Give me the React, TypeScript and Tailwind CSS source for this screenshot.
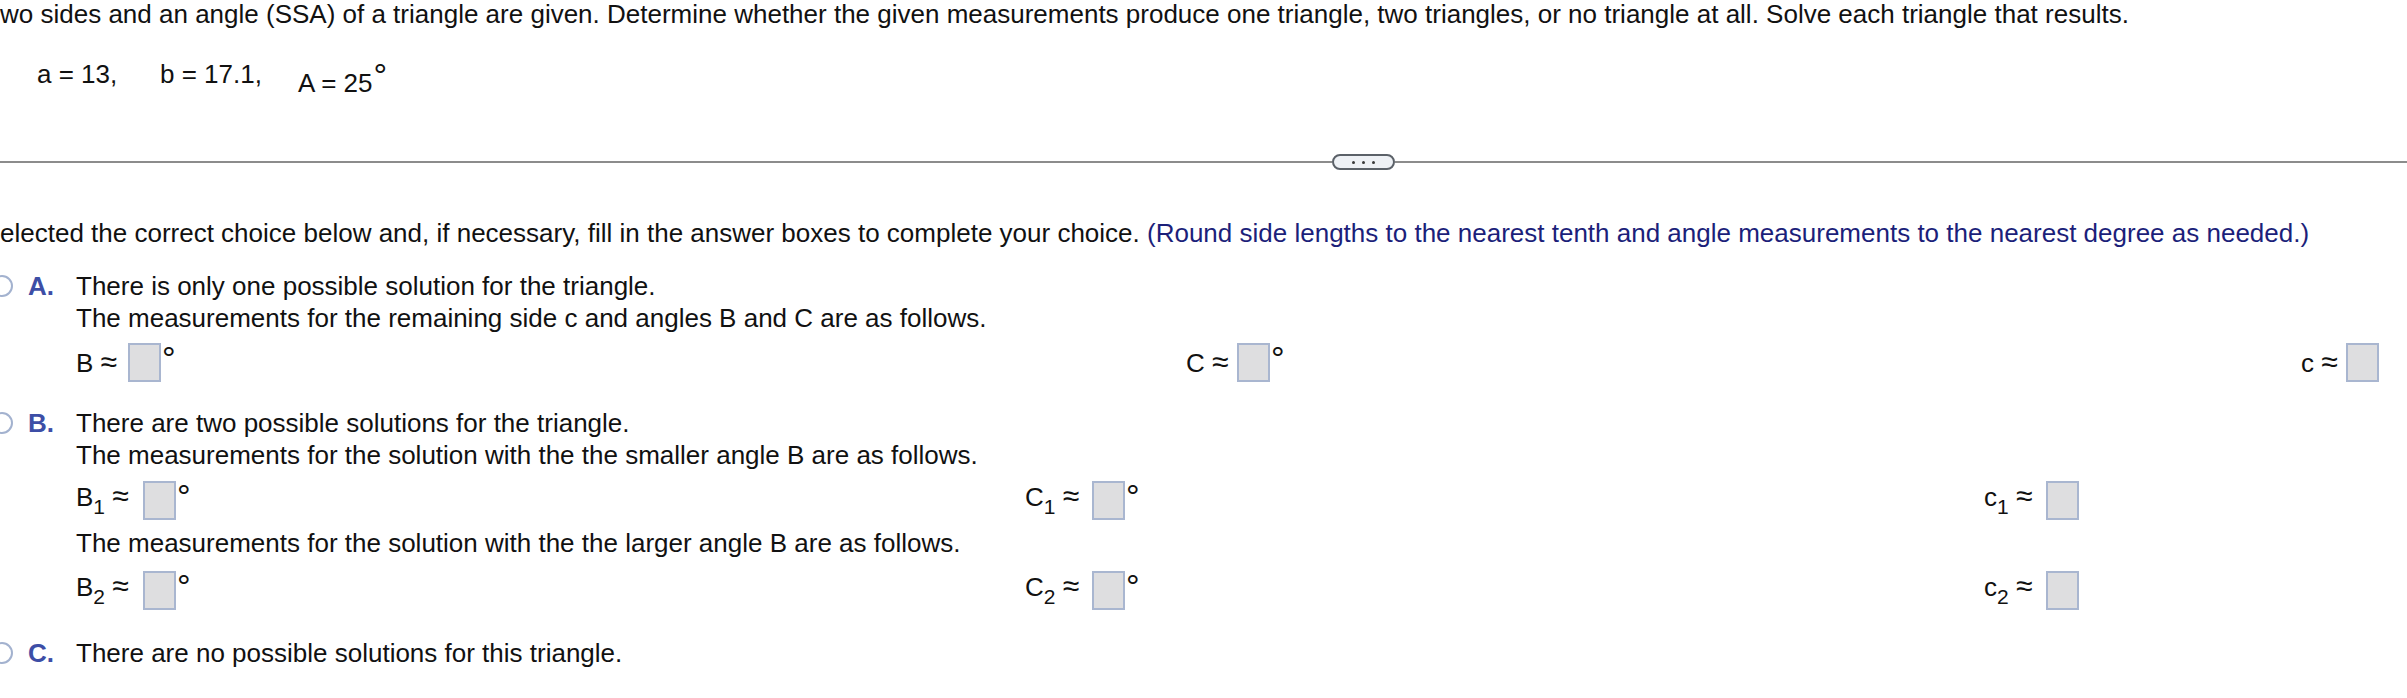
import type { ReactNode } from 'react';

const INK = 'text-[#111111]';

function AnswerBox() {
  return <span className="block h-[39px] w-[33px] shrink-0 border-2 border-[#a9b6d0] bg-[#dedee0]" />;
}

function Degree() {
  return <span className="-mt-[1px] ml-[1px] text-[34px] leading-[32px]">°</span>;
}

function Entry({
  name,
  sub,
  degree,
  labelClass,
}: {
  name: string;
  sub?: string;
  degree?: boolean;
  labelClass: string;
}) {
  return (
    <div className="flex items-start">
      <span className={`${labelClass} shrink-0 whitespace-nowrap leading-[32px] ${sub ? '-mt-[1px]' : 'mt-[3px]'}`}>
        {name}
        {sub && <span className="align-[-8px] text-[21px]">{sub}</span>} <span className="text-[30px]">≈</span>
      </span>
      <AnswerBox />
      {degree && <Degree />}
    </div>
  );
}

function Option({ letter, children }: { letter: string; children: ReactNode }) {
  return (
    <div className="flex items-start">
      <span className="-ml-[9px] mt-[5px] h-[22px] w-[22px] shrink-0 rounded-full border-2 border-[#a3b2cf] bg-white" />
      <span className="ml-[15px] w-[48px] shrink-0 font-bold leading-[32px] text-[#3d4ea6]">{letter}.</span>
      <div className="flex flex-col">{children}</div>
    </div>
  );
}

export default function App() {
  return (
    <div
      className={`flex h-[698px] w-[2407px] flex-col overflow-hidden bg-white font-['Liberation_Sans',Arial,sans-serif] text-[26px] leading-[32px] ${INK}`}
    >
      <p className="-mt-[2px] whitespace-nowrap">
        wo sides and an angle (SSA) of a triangle are given. Determine whether the given measurements produce one
        triangle, two triangles, or no triangle at all. Solve each triangle that results.
      </p>

      <div className="ml-[37px] mt-[28px] flex whitespace-nowrap">
        <span className="w-[123px]">a = 13,</span>
        <span className="w-[138px]">b = 17.1,</span>
        <span>
          A = 25<span className="ml-[1px] align-[5px] text-[34px] leading-none">°</span>
        </span>
      </div>

      <div className="mt-[55px] flex h-[16px] items-center">
        <div className="h-[2px] w-[1332px] bg-[#8c8c8c]" />
        <div className="flex h-[16px] w-[63px] items-center justify-center gap-[7px] rounded-full border-2 border-[#5b6168] bg-[#eef1f5]">
          <span className="h-[3px] w-[3px] rounded-full bg-[#3a3a3a]" />
          <span className="h-[3px] w-[3px] rounded-full bg-[#3a3a3a]" />
          <span className="h-[3px] w-[3px] rounded-full bg-[#3a3a3a]" />
        </div>
        <div className="h-[2px] flex-1 bg-[#8c8c8c]" />
      </div>

      <p className="mt-[47px] whitespace-nowrap">
        elected the correct choice below and, if necessary, fill in the answer boxes to complete your choice.{' '}
        <span className="text-[#1c1f7a]">
          (Round side lengths to the nearest tenth and angle measurements to the nearest degree as needed.)
        </span>
      </p>

      <div className="mt-[21px]">
        <Option letter="A">
          <p className="whitespace-nowrap">There is only one possible solution for the triangle.</p>
          <p className="whitespace-nowrap">The measurements for the remaining side c and angles B and C are as follows.</p>
          <div className="mt-[9px] grid grid-cols-[1110px_1115px_auto]">
            <Entry name="B" labelClass="w-[52px]" degree />
            <Entry name="C" labelClass="w-[51px]" degree />
            <Entry name="c" labelClass="w-[45px]" />
          </div>
        </Option>
      </div>

      <div className="mt-[25px]">
        <Option letter="B">
          <p className="whitespace-nowrap">There are two possible solutions for the triangle.</p>
          <p className="whitespace-nowrap">
            The measurements for the solution with the the smaller angle B are as follows.
          </p>
          <div className="mt-[10px] grid grid-cols-[949px_959px_auto]">
            <Entry name="B" sub="1" labelClass="w-[67px]" degree />
            <Entry name="C" sub="1" labelClass="w-[67px]" degree />
            <Entry name="c" sub="1" labelClass="w-[62px]" />
          </div>
          <p className="mt-[4px] whitespace-nowrap">
            The measurements for the solution with the the larger angle B are as follows.
          </p>
          <div className="mt-[12px] grid grid-cols-[949px_959px_auto]">
            <Entry name="B" sub="2" labelClass="w-[67px]" degree />
            <Entry name="C" sub="2" labelClass="w-[67px]" degree />
            <Entry name="c" sub="2" labelClass="w-[62px]" />
          </div>
        </Option>
      </div>

      <div className="mt-[24px]">
        <Option letter="C">
          <p className="whitespace-nowrap">There are no possible solutions for this triangle.</p>
        </Option>
      </div>
    </div>
  );
}
